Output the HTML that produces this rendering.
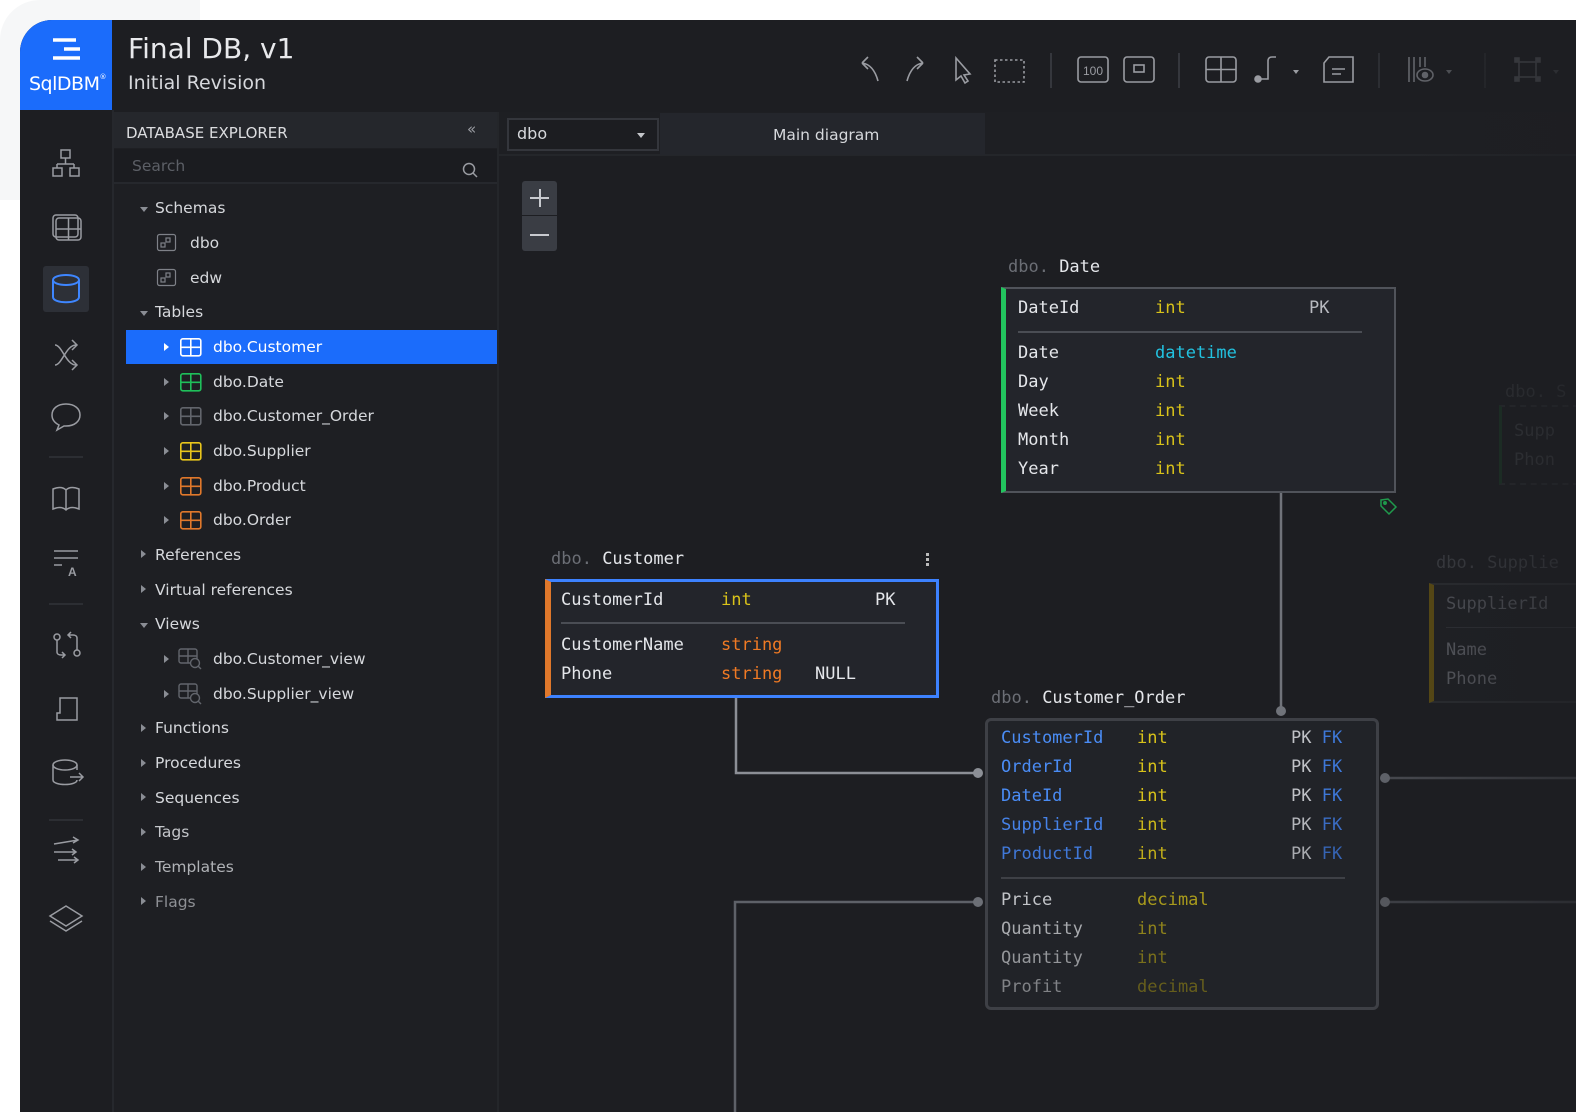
<!DOCTYPE html>
<html><head><meta charset="utf-8">
<style>
*{margin:0;padding:0;box-sizing:border-box}
html,body{width:1576px;height:1112px;overflow:hidden}
body{background:#fff;position:relative;font-family:"Liberation Sans","DejaVu Sans",sans-serif}
.abs{position:absolute}
.app{position:absolute;left:20px;top:20px;width:1556px;height:1092px;background:#1d1e22;border-top-left-radius:32px;overflow:hidden}
.t{position:absolute;white-space:nowrap}
.ui{font-family:"DejaVu Sans","Liberation Sans",sans-serif;color:#d6d8dc;font-size:15.5px}
.mono{font-family:"DejaVu Sans Mono","Liberation Mono",monospace;font-size:17px;color:#e4e6ea}
.tri{position:absolute;width:0;height:0}
.tr{border-left:5px solid #8a8d94;border-top:4px solid transparent;border-bottom:4px solid transparent}
.td{border-top:5px solid #8a8d94;border-left:4px solid transparent;border-right:4px solid transparent}
svg{position:absolute;overflow:visible}
</style></head><body>
<div class="abs" style="left:0;top:0;width:200px;height:200px;background:#f6f7f8;border-top-left-radius:40px"></div>
<div class="app">
 <div class="abs" style="left:0;top:0;width:92px;height:90px;background:#1b6cfb"></div>
 <svg style="left:30px;top:18px" width="32" height="24"><g stroke="#fff" stroke-width="3.5"><line x1="3" y1="2" x2="26" y2="2"/><line x1="14" y1="11" x2="30" y2="11"/><line x1="3" y1="20" x2="30" y2="20"/></g></svg>
 <div class="t" style="left:9px;top:53px;color:#fff;font-size:19px;font-family:'DejaVu Sans',sans-serif;letter-spacing:-0.5px">SqlDBM<span style="font-size:7px;vertical-align:top">®</span></div>
 <div class="t ui" style="left:108px;top:12px;font-size:28px;color:#e8e9ec">Final DB, v1</div>
 <div class="t ui" style="left:108px;top:52px;font-size:19px;color:#d6d8dc">Initial Revision</div>

 <!-- toolbar: svg origin = abs (840,48) -->
 <svg style="left:820px;top:28px" width="720" height="44" fill="none" stroke="#9a9ca2" stroke-width="1.6">
  <path d="M38 33 C35 22 30 16 22 15 M22 15 l6 -6 M22 15 l6 6"/>
  <path d="M67 33 C70 22 75 16 83 15 M83 15 l-6 -6 M83 15 l-6 6"/>
  <path d="M116 10 L116 32 L121 28 L125 35 L128 33 L124 27 L130 26 Z"/>
  <rect x="155" y="12" width="29" height="22" stroke-dasharray="2.5 2.5"/>
  <line x1="211" y1="5" x2="211" y2="40" stroke="#35373d" stroke-width="2"/>
  <rect x="238" y="9" width="30" height="25" rx="3"/>
  <text x="253" y="27" font-size="12" fill="#9a9ca2" stroke="none" text-anchor="middle" font-family="Liberation Sans">100</text>
  <rect x="284" y="9" width="30" height="25" rx="3"/><rect x="294" y="17" width="10" height="7"/>
  <line x1="339" y1="5" x2="339" y2="40" stroke="#35373d" stroke-width="2"/>
  <rect x="366" y="9" width="30" height="25" rx="3"/><line x1="381" y1="9" x2="381" y2="34"/><line x1="366" y1="21.5" x2="396" y2="21.5"/>
  <path d="M418 31 L428 31 L428 13 C428 10 430 9 432 9 L436 9"/><circle cx="418" cy="31" r="3" fill="#9a9ca2"/>
  <path d="M453 22 l6 0 l-3 4z" fill="#9a9ca2" stroke="none"/>
  <path d="M489 9 L513 9 L513 34 L484 34 L484 15 Z M489 9 L484 15"/><line x1="492" y1="21" x2="505" y2="21"/><line x1="492" y1="26" x2="501" y2="26"/>
  <line x1="539" y1="5" x2="539" y2="40" stroke="#2c2e33" stroke-width="2"/>
  <g stroke="#66686e"><line x1="569" y1="9" x2="569" y2="34"/><line x1="574" y1="9" x2="574" y2="34"/><line x1="580" y1="9" x2="580" y2="19"/><line x1="585" y1="9" x2="585" y2="19"/><ellipse cx="585" cy="27" rx="8" ry="6"/><circle cx="585" cy="27" r="2.5" fill="#66686e"/></g>
  <path d="M606 22 l6 0 l-3 4z" fill="#55575c" stroke="none"/>
  <line x1="645" y1="5" x2="645" y2="40" stroke="#26282c" stroke-width="2"/>
  <g stroke="#45474c"><rect x="679" y="14" width="17" height="15"/><rect x="675" y="10" width="4" height="4" fill="#45474c"/><rect x="696" y="10" width="4" height="4" fill="#45474c"/><rect x="675" y="29" width="4" height="4" fill="#45474c"/><rect x="696" y="29" width="4" height="4" fill="#45474c"/></g>
  <path d="M713 22 l6 0 l-3 4z" fill="#3a3c41" stroke="none"/>
 </svg>

 <!-- left icon bar -->
 <div class="abs" style="left:92px;top:90px;width:2px;height:1002px;background:#26282d"></div>
 <div class="abs" style="left:23px;top:246px;width:46px;height:46px;background:#2d3037;border-radius:3px"></div>
 <svg style="left:0;top:0" width="92" height="1000" fill="none" stroke="#9a9ca2" stroke-width="1.5">
  <rect x="41" y="130" width="9" height="8"/><path d="M45.5 138 V144 M37 144 H54 M37 144 V148 M54 144 V148"/><rect x="33" y="148" width="9" height="8"/><rect x="50" y="148" width="9" height="8"/>
  <rect x="33" y="195" width="25" height="22" rx="3"/><rect x="36" y="198" width="25" height="22" rx="3"/><line x1="48.5" y1="198" x2="48.5" y2="220"/><line x1="36" y1="209" x2="61" y2="209"/>
  <g stroke="#3e86ff" stroke-width="2"><ellipse cx="46" cy="260" rx="13" ry="5"/><path d="M33 260 V277 C33 284 59 284 59 277 V260"/></g>
  <path d="M35 325 C42 325 46 345 56 345 M35 345 C42 345 46 325 56 325 M52 320 l5 5 l-5 5 M52 340 l5 5 l-5 5"/>
  <path d="M46 384 C37 384 32 389 32 395 C32 400 35 403 39 405 L37 410 L44 406 C45 406 46 406 46 406 C55 406 60 401 60 395 C60 389 55 384 46 384 Z"/>
  <line x1="29" y1="437" x2="63" y2="437" stroke="#2c2e33" stroke-width="2"/>
  <path d="M33 469 L33 489 C38 487 43 487 46 490 C49 487 54 487 59 489 L59 469 C54 467 49 467 46 470 C43 467 38 467 33 469 Z M46 470 V490"/>
  <line x1="34" y1="531" x2="58" y2="531"/><line x1="34" y1="538" x2="58" y2="538"/><line x1="34" y1="545" x2="42" y2="545"/><text x="48" y="556" font-size="12" fill="#9a9ca2" stroke="none" font-family="Liberation Sans" font-weight="bold">A</text>
  <line x1="29" y1="584" x2="63" y2="584" stroke="#2c2e33" stroke-width="2"/>
  <circle cx="37" cy="617" r="3"/><path d="M37 620 V632 C37 634 39 635 41 635 L45 635 M42 632 l3 3 l-3 3"/><circle cx="57" cy="633" r="3"/><path d="M57 630 V618 C57 616 55 615 53 615 L48 615 M51 612 l-3 3 l3 3"/>
  <path d="M40 678 H57 V700 H37 V693 H40 Z M37 693 V700"/>
  <ellipse cx="45" cy="745" rx="12" ry="5"/><path d="M33 745 V760 C33 766 57 766 57 760 M57 745 V750 M50 757 H63 M59 753 l4 4 l-4 4"/>
  <line x1="29" y1="800" x2="63" y2="800" stroke="#2c2e33" stroke-width="2"/>
  <path d="M34 824 L58 820 M53 817 l5 3 l-5 3 M34 832 L56 832 M52 829 l4 3 l-4 3 M38 840 L58 840 M54 837 l4 3 l-4 3"/>
  <path d="M46 886 L62 896 L46 906 L30 896 Z M30 901 L46 911 L62 901"/>
 </svg>

 <!-- explorer -->
 <div class="abs" style="left:94px;top:92px;width:383px;height:1000px;background:#1e1f23"></div>
 <div class="abs" style="left:94px;top:92px;width:383px;height:36px;background:#25272c"></div>
 <div class="t ui" style="left:106px;top:104px;font-size:15px;color:#dcdde0">DATABASE EXPLORER</div>
 <div class="t ui" style="left:447px;top:100px;font-size:15px;color:#9a9ca2">«</div>
 <div class="abs" style="left:94px;top:129px;width:383px;height:35px;background:#1b1c20;border-bottom:2px solid #26282d"></div>
 <div class="t ui" style="left:112px;top:137px;color:#5c5f66;font-size:15.5px">Search</div>
 <svg style="left:442px;top:142px" width="16" height="16" fill="none" stroke="#9a9ca2" stroke-width="1.5"><circle cx="7" cy="7" r="5.5"/><line x1="11" y1="11" x2="15" y2="15"/></svg>
 <div class="abs" style="left:477px;top:92px;width:2px;height:1000px;background:#24262a"></div>

 <div class="abs" style="left:106px;top:310px;width:371px;height:34px;background:#1b6cfb"></div>
 <div class="tri td" style="left:120px;top:187px"></div><div class="t ui" style="left:135px;top:179px">Schemas</div>
 <svg style="left:137px;top:214px" width="20" height="18" fill="none" stroke="#7e8188" stroke-width="1.2"><rect x="0.5" y="0.5" width="18" height="16" rx="2"/><rect x="4" y="9" width="4" height="4"/><rect x="9" y="4" width="4" height="4"/></svg>
 <div class="t ui" style="left:170px;top:214px">dbo</div>
 <svg style="left:137px;top:249px" width="20" height="18" fill="none" stroke="#7e8188" stroke-width="1.2"><rect x="0.5" y="0.5" width="18" height="16" rx="2"/><rect x="4" y="9" width="4" height="4"/><rect x="9" y="4" width="4" height="4"/></svg>
 <div class="t ui" style="left:170px;top:249px">edw</div>
 <div class="tri td" style="left:120px;top:291px"></div><div class="t ui" style="left:135px;top:283px">Tables</div>

 <div class="tri tr" style="left:144px;top:323px;border-left-color:#fff"></div>
 <svg style="left:160px;top:318px" width="22" height="20" fill="none" stroke="#fff" stroke-width="1.6"><rect x="0.8" y="0.8" width="20" height="17" rx="2"/><line x1="10.8" y1="1" x2="10.8" y2="18"/><line x1="1" y1="9.3" x2="21" y2="9.3"/></svg>
 <div class="t ui" style="left:193px;top:318px;color:#fff">dbo.Customer</div>

 <div class="tri tr" style="left:144px;top:358px"></div>
 <svg style="left:160px;top:353px" width="22" height="20" fill="none" stroke="#1fbf5a" stroke-width="1.6"><rect x="0.8" y="0.8" width="20" height="17" rx="2"/><line x1="10.8" y1="1" x2="10.8" y2="18"/><line x1="1" y1="9.3" x2="21" y2="9.3"/></svg>
 <div class="t ui" style="left:193px;top:353px">dbo.Date</div>
 <div class="tri tr" style="left:144px;top:392px"></div>
 <svg style="left:160px;top:387px" width="22" height="20" fill="none" stroke="#62656c" stroke-width="1.6"><rect x="0.8" y="0.8" width="20" height="17" rx="2"/><line x1="10.8" y1="1" x2="10.8" y2="18"/><line x1="1" y1="9.3" x2="21" y2="9.3"/></svg>
 <div class="t ui" style="left:193px;top:387px">dbo.Customer_Order</div>
 <div class="tri tr" style="left:144px;top:427px"></div>
 <svg style="left:160px;top:422px" width="22" height="20" fill="none" stroke="#e8c51c" stroke-width="1.6"><rect x="0.8" y="0.8" width="20" height="17" rx="2"/><line x1="10.8" y1="1" x2="10.8" y2="18"/><line x1="1" y1="9.3" x2="21" y2="9.3"/></svg>
 <div class="t ui" style="left:193px;top:422px">dbo.Supplier</div>
 <div class="tri tr" style="left:144px;top:462px"></div>
 <svg style="left:160px;top:457px" width="22" height="20" fill="none" stroke="#e0782b" stroke-width="1.6"><rect x="0.8" y="0.8" width="20" height="17" rx="2"/><line x1="10.8" y1="1" x2="10.8" y2="18"/><line x1="1" y1="9.3" x2="21" y2="9.3"/></svg>
 <div class="t ui" style="left:193px;top:457px">dbo.Product</div>
 <div class="tri tr" style="left:144px;top:496px"></div>
 <svg style="left:160px;top:491px" width="22" height="20" fill="none" stroke="#e0782b" stroke-width="1.6"><rect x="0.8" y="0.8" width="20" height="17" rx="2"/><line x1="10.8" y1="1" x2="10.8" y2="18"/><line x1="1" y1="9.3" x2="21" y2="9.3"/></svg>
 <div class="t ui" style="left:193px;top:491px">dbo.Order</div>

 <div class="tri tr" style="left:121px;top:530px"></div><div class="t ui" style="left:135px;top:526px">References</div>
 <div class="tri tr" style="left:121px;top:565px"></div><div class="t ui" style="left:135px;top:561px">Virtual references</div>
 <div class="tri td" style="left:120px;top:603px"></div><div class="t ui" style="left:135px;top:595px">Views</div>
 <div class="tri tr" style="left:144px;top:635px"></div>
 <svg style="left:158px;top:628px" width="26" height="24" fill="none" stroke="#62656c" stroke-width="1.4"><rect x="1" y="1" width="18" height="14" rx="2"/><line x1="10" y1="1" x2="10" y2="15"/><line x1="1" y1="8" x2="19" y2="8"/><circle cx="17" cy="15" r="4.5" fill="#1e1f23"/><line x1="20" y1="18" x2="23" y2="21"/></svg>
 <div class="t ui" style="left:193px;top:630px">dbo.Customer_view</div>
 <div class="tri tr" style="left:144px;top:670px"></div>
 <svg style="left:158px;top:663px" width="26" height="24" fill="none" stroke="#62656c" stroke-width="1.4"><rect x="1" y="1" width="18" height="14" rx="2"/><line x1="10" y1="1" x2="10" y2="15"/><line x1="1" y1="8" x2="19" y2="8"/><circle cx="17" cy="15" r="4.5" fill="#1e1f23"/><line x1="20" y1="18" x2="23" y2="21"/></svg>
 <div class="t ui" style="left:193px;top:665px">dbo.Supplier_view</div>
 <div class="tri tr" style="left:121px;top:704px"></div><div class="t ui" style="left:135px;top:699px">Functions</div>
 <div class="tri tr" style="left:121px;top:739px"></div><div class="t ui" style="left:135px;top:734px">Procedures</div>
 <div class="tri tr" style="left:121px;top:773px"></div><div class="t ui" style="left:135px;top:769px">Sequences</div>
 <div class="tri tr" style="left:121px;top:808px"></div><div class="t ui" style="left:135px;top:803px;color:#c4c6ca">Tags</div>
 <div class="tri tr" style="left:121px;top:843px"></div><div class="t ui" style="left:135px;top:838px;color:#b0b2b6">Templates</div>
 <div class="tri tr" style="left:121px;top:877px"></div><div class="t ui" style="left:135px;top:873px;color:#8e9095">Flags</div>

 <!-- canvas top bar -->
 <div class="abs" style="left:479px;top:92px;width:1077px;height:44px;background:#1e1f23;border-bottom:2px solid #24262a"></div>
 <div class="abs" style="left:487px;top:98px;width:152px;height:33px;border:2px solid #34363c;background:#1c1d21"></div>
 <div class="t ui" style="left:497px;top:104px;font-size:16px">dbo</div>
 <div class="tri td" style="left:617px;top:113px;border-top-color:#c4c6ca"></div>
 <div class="abs" style="left:640px;top:93px;width:325px;height:42px;background:#24262c"></div>
 <div class="t ui" style="left:753px;top:106px;font-size:15.5px">Main diagram</div>

 <!-- zoom buttons -->
 <div class="abs" style="left:502px;top:161px;width:35px;height:34px;background:#3a3d44;border-radius:3px 3px 0 0"></div>
 <div class="abs" style="left:502px;top:196px;width:35px;height:35px;background:#3a3d44;border-radius:0 0 3px 3px"></div>
 <div class="abs" style="left:510px;top:177px;width:19px;height:1.5px;background:#c8cacf"></div>
 <div class="abs" style="left:519px;top:169px;width:1.5px;height:18px;background:#c8cacf"></div>
 <div class="abs" style="left:510px;top:214px;width:19px;height:1.5px;background:#c8cacf"></div>

 <!-- connectors -->
 <svg style="left:0;top:0" width="1556" height="1092" fill="none">
  <path d="M716 678 V753 H958" stroke="#8c8f96" stroke-width="2.5"/>
  <circle cx="958" cy="753" r="5" fill="#8c8f96"/>
  <path d="M1261 473 V691" stroke="#70737a" stroke-width="2.5"/>
  <circle cx="1261" cy="691" r="5" fill="#70737a"/>
  <path d="M715 1092 V882 H958" stroke="#5e6168" stroke-width="2.5"/>
  <circle cx="958" cy="882" r="5" fill="#6c6f76"/>
  <path d="M1365 758 H1556" stroke="#45474d" stroke-width="2.5"/><circle cx="1365" cy="758" r="5" fill="#5e6168"/>
  <path d="M1365 882 H1556" stroke="#3c3e44" stroke-width="2.5"/><circle cx="1365" cy="882" r="5" fill="#55575d"/>
 </svg>

 <!-- Date table -->
 <div class="t mono" style="left:988px;top:237px"><span style="color:#6b6e75">dbo.</span> Date</div>
 <div class="abs" style="left:981px;top:267px;width:395px;height:206px;background:#23252b;border:2px solid #50535a;border-left:5px solid #22c55e"></div>
 <div class="t mono" style="left:998px;top:278px">DateId</div><div class="t mono" style="left:1135px;top:278px;color:#d8c21a">int</div><div class="t mono" style="left:1289px;top:278px;color:#b8bac0">PK</div>
 <div class="abs" style="left:998px;top:311px;width:344px;height:1.5px;background:#4a4d54"></div>
 <div class="t mono" style="left:998px;top:323px">Date</div><div class="t mono" style="left:1135px;top:323px;color:#22c2e0">datetime</div>
 <div class="t mono" style="left:998px;top:352px">Day</div><div class="t mono" style="left:1135px;top:352px;color:#d8c21a">int</div>
 <div class="t mono" style="left:998px;top:381px">Week</div><div class="t mono" style="left:1135px;top:381px;color:#d8c21a">int</div>
 <div class="t mono" style="left:998px;top:410px">Month</div><div class="t mono" style="left:1135px;top:410px;color:#d8c21a">int</div>
 <div class="t mono" style="left:998px;top:439px">Year</div><div class="t mono" style="left:1135px;top:439px;color:#d8c21a">int</div>
 <svg style="left:1360px;top:478px" width="18" height="18" fill="none" stroke="#1f9a4c" stroke-width="1.5"><path d="M1 2 L8 1 L16 9 L9 16 L1 8 Z"/><circle cx="5" cy="5" r="1.2" fill="#1f9a4c"/></svg>

 <!-- faint right tables -->
 <div class="t mono" style="left:1485px;top:362px;color:#303236">dbo. S</div>
 <div class="abs" style="left:1479px;top:385px;width:80px;height:80px;border:2px dashed #27292d;border-left:3px solid #1c3325"></div>
 <div class="t mono" style="left:1494px;top:401px;color:#35373b">Supp</div>
 <div class="t mono" style="left:1494px;top:430px;color:#35373b">Phon</div>
 <div class="t mono" style="left:1416px;top:533px;color:#3a3c41">dbo. Supplie</div>
 <div class="abs" style="left:1409px;top:563px;width:147px;height:120px;background:#1f2024;border-top:2px solid #2a2c30;border-bottom:2px solid #2a2c30;border-left:5px solid #5a4b14"></div>
 <div class="t mono" style="left:1426px;top:574px;color:#505258">SupplierId</div>
 <div class="abs" style="left:1426px;top:607px;width:130px;height:1px;background:#2e3035"></div>
 <div class="t mono" style="left:1426px;top:620px;color:#585a60">Name</div>
 <div class="t mono" style="left:1426px;top:649px;color:#585a60">Phone</div>

 <!-- Customer table -->
 <div class="t mono" style="left:531px;top:529px"><span style="color:#6b6e75">dbo.</span> Customer</div>
 <div class="abs" style="left:906px;top:533px;width:3px;height:3px;background:#bbb;box-shadow:0 5px 0 #bbb,0 10px 0 #bbb"></div>
 <div class="abs" style="left:525px;top:559px;width:394px;height:119px;background:#23252b;border:3px solid #3d82ff;border-left:6px solid #e0782b"></div>
 <div class="t mono" style="left:541px;top:570px">CustomerId</div><div class="t mono" style="left:701px;top:570px;color:#d8c21a">int</div><div class="t mono" style="left:855px;top:570px">PK</div>
 <div class="abs" style="left:541px;top:602px;width:344px;height:1.5px;background:#4a4d54"></div>
 <div class="t mono" style="left:541px;top:615px">CustomerName</div><div class="t mono" style="left:701px;top:615px;color:#f07a24">string</div>
 <div class="t mono" style="left:541px;top:644px">Phone</div><div class="t mono" style="left:701px;top:644px;color:#f07a24">string</div><div class="t mono" style="left:795px;top:644px">NULL</div>

 <!-- Customer_Order table -->
 <div class="t mono" style="left:971px;top:668px"><span style="color:#6b6e75">dbo.</span> Customer_Order</div>
 <div class="abs" style="left:965px;top:698px;width:394px;height:292px;background:#212328;border:3px solid #3e4046;border-radius:6px"></div>
 <div class="t mono" style="left:981px;top:708px;color:#4a8cf5">CustomerId</div><div class="t mono" style="left:1117px;top:708px;color:#d8c21a">int</div><div class="t mono" style="left:1271px;top:708px;color:#c0c2c7">PK <span style="color:#3e78d8">FK</span></div>
 <div class="t mono" style="left:981px;top:737px;color:#4a8cf5">OrderId</div><div class="t mono" style="left:1117px;top:737px;color:#d8c21a">int</div><div class="t mono" style="left:1271px;top:737px;color:#c0c2c7">PK <span style="color:#3e78d8">FK</span></div>
 <div class="t mono" style="left:981px;top:766px;color:#4a8cf5">DateId</div><div class="t mono" style="left:1117px;top:766px;color:#d8c21a">int</div><div class="t mono" style="left:1271px;top:766px;color:#c0c2c7">PK <span style="color:#3e78d8">FK</span></div>
 <div class="t mono" style="left:981px;top:795px;color:#4682e8">SupplierId</div><div class="t mono" style="left:1117px;top:795px;color:#ccb81a">int</div><div class="t mono" style="left:1271px;top:795px;color:#b4b6bb">PK <span style="color:#3a6cc4">FK</span></div>
 <div class="t mono" style="left:981px;top:824px;color:#4078d8">ProductId</div><div class="t mono" style="left:1117px;top:824px;color:#c0ad1a">int</div><div class="t mono" style="left:1271px;top:824px;color:#a8aaaf">PK <span style="color:#3664b4">FK</span></div>
 <div class="abs" style="left:981px;top:857px;width:344px;height:1.5px;background:#3e4046"></div>
 <div class="t mono" style="left:981px;top:870px;color:#c2c4c8">Price</div><div class="t mono" style="left:1117px;top:870px;color:#a89a1c">decimal</div>
 <div class="t mono" style="left:981px;top:899px;color:#a8aaae">Quantity</div><div class="t mono" style="left:1117px;top:899px;color:#8e821c">int</div>
 <div class="t mono" style="left:981px;top:928px;color:#94969a">Quantity</div><div class="t mono" style="left:1117px;top:928px;color:#7a701c">int</div>
 <div class="t mono" style="left:981px;top:957px;color:#808286">Profit</div><div class="t mono" style="left:1117px;top:957px;color:#665e1c">decimal</div>

 <div class="abs" style="left:1380px;top:0;width:176px;height:1092px;background:linear-gradient(to right,rgba(29,30,34,0),rgba(29,30,34,0.55))"></div>
</div>
</body></html>
